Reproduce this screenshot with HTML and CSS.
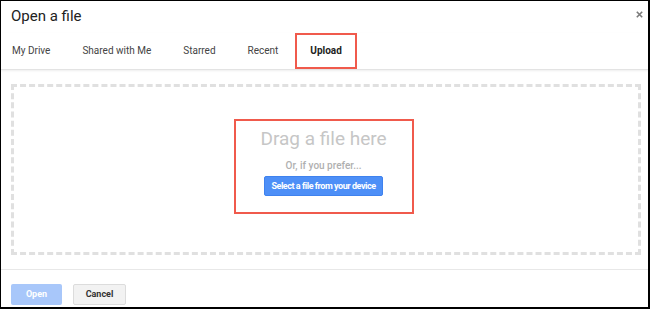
FILE: index.html
```html
<!DOCTYPE html>
<html>
<head>
<meta charset="utf-8">
<link rel="stylesheet" href="styles.css">
</head>
<body>
<div class="dialog">
  <div class="header">
    <div class="title">Open a file</div>
    <svg class="close" width="7" height="7" viewBox="0 0 7 7"><path d="M0.8 0.8L6.2 6.2M6.2 0.8L0.8 6.2" stroke="#7a7a7a" stroke-width="1.6"/></svg>
  </div>
  <div class="tabs">
    <div class="tab tab-first">My Drive</div>
    <div class="tab">Shared with Me</div>
    <div class="tab">Starred</div>
    <div class="tab">Recent</div>
    <div class="tab tab-active">Upload</div>
  </div>
  <div class="content">
    <div class="dropzone">
      <div class="highlight">
        <div class="drag">Drag a file here</div>
        <div class="prefer">Or, if you prefer...</div>
        <div class="select-btn">Select a file from your device</div>
      </div>
    </div>
  </div>
  <div class="footer">
    <div class="btn btn-open">Open</div>
    <div class="btn btn-cancel">Cancel</div>
  </div>
</div>
</body>
</html>
```
FILE: styles.css
```css
html, body {
  margin: 0;
  padding: 0;
  background: #000;
}
body {
  font-family: Roboto, "Liberation Sans", Arial, sans-serif;
}
.dialog {
  margin: 1px 0 0 1px;
  width: 647px;
  height: 306px;
  background: #fff;
  display: flex;
  flex-direction: column;
  overflow: hidden;
}
.header {
  display: flex;
  justify-content: space-between;
  align-items: flex-start;
  padding: 5px 5px 0 10px;
}
.title {
  font-size: 15px;
  line-height: 20px;
  color: #222;
}
.close {
  margin-top: 5px;
}
.tabs {
  display: flex;
  gap: 2px;
  margin-top: 7px;
  border-bottom: 1px solid #e3e3e3;
  box-shadow: 0 1px 2px rgba(0, 0, 0, 0.07);
}
.tab {
  height: 32px;
  line-height: 32px;
  padding: 0 13px;
  border: 2px solid transparent;
  font-size: 10px;
  color: #444;
}
.tab-first {
  padding-left: 9px;
}
.tab-active {
  border-color: #f05a4c;
  font-weight: bold;
  color: #222;
}
.content {
  padding: 14px 7px 14px 10px;
}
.dropzone {
  height: 171px;
  box-sizing: border-box;
  border: 3px dashed #e0e0e0;
  display: flex;
  flex-direction: column;
  align-items: center;
  padding-top: 32px;
}
.highlight {
  width: 180px;
  margin-right: 5px;
  box-sizing: border-box;
  border: 2px solid #f05a4c;
  display: flex;
  flex-direction: column;
  align-items: center;
  padding: 7px 0 16px;
}
.drag {
  font-size: 19px;
  line-height: 22px;
  color: #c6c6c6;
}
.prefer {
  margin-top: 10px;
  font-size: 10px;
  line-height: 12px;
  color: #b0b0b0;
  font-weight: 500;
}
.select-btn {
  margin-top: 4px;
  height: 18px;
  line-height: 18px;
  padding: 0 6px;
  background: #4d8ff7;
  border: 1px solid #3f82ee;
  border-radius: 2px;
  color: #fff;
  font-size: 9px;
  font-weight: bold;
  letter-spacing: -0.45px;
}
.footer {
  border-top: 1px solid #e8e8e8;
  padding: 14px 10px 0;
  display: flex;
  gap: 11px;
}
.btn {
  height: 21px;
  line-height: 21px;
  box-sizing: border-box;
  font-size: 9px;
  font-weight: bold;
  text-align: center;
  border-radius: 2px;
}
.btn-open {
  width: 51px;
  background: #a8c7fa;
  color: #fff;
}
.btn-cancel {
  width: 53px;
  background: #f2f2f2;
  border: 1px solid #dcdcdc;
  color: #333;
  line-height: 19px;
}
```
